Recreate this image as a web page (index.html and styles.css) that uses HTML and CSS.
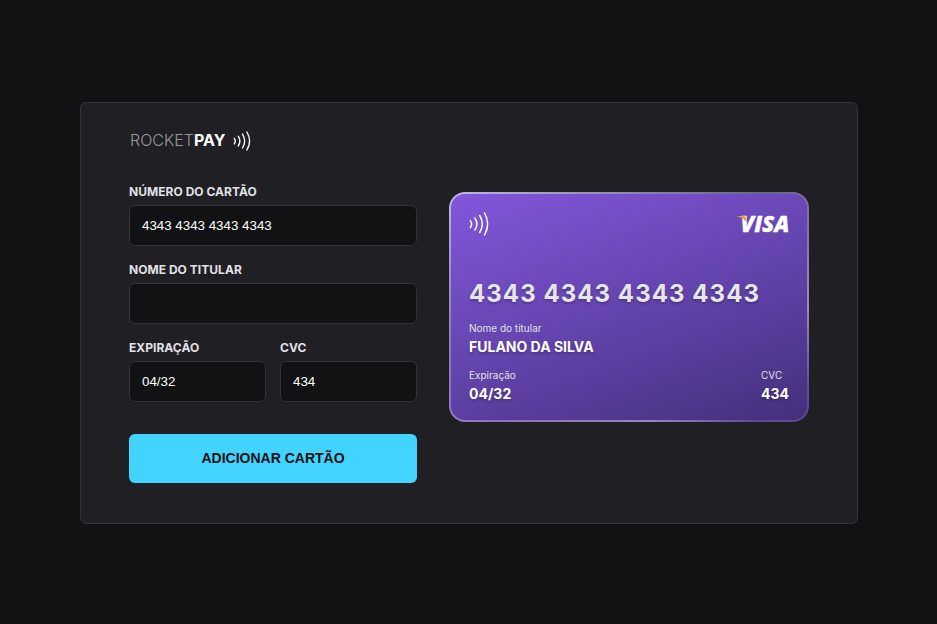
FILE: index.html
```html
<!DOCTYPE html>
<html lang="pt-BR">
<head>
<meta charset="UTF-8">
<title>Rocketpay</title>
<link rel="stylesheet" href="styles.css">
</head>
<body>
<main class="panel">
  <section class="left">
    <header class="logo">
      <span class="logo-name">ROCKET<b>PAY</b></span>
      <svg class="logo-waves" width="18" height="20" viewBox="0 0 18 20" fill="none" stroke="#fff" stroke-width="1.4" stroke-linecap="round"><path d="M1.3 7.4Q3.2 10 1.3 12.8M5.2 5.2Q8.6 10 5.2 15M9.5 3.1Q13.8 10 9.5 17M13.9 1Q19.3 10 13.9 19"/></svg>
    </header>
    <form class="form">
      <div class="field"><label for="number">NÚMERO DO CARTÃO</label><input id="number" value="4343 4343 4343 4343"></div>
      <div class="field"><label for="name">NOME DO TITULAR</label><input id="name"></div>
      <div class="pair">
        <div class="field"><label for="exp">EXPIRAÇÃO</label><input id="exp" value="04/32"></div>
        <div class="field"><label for="cvc">CVC</label><input id="cvc" value="434"></div>
      </div>
      <button type="button">ADICIONAR CARTÃO</button>
    </form>
  </section>
  <section class="card">
    <div class="card-top">
      <svg class="card-waves" width="20" height="24" viewBox="0 0 20 24" fill="none" stroke="#fff" stroke-width="1.5" stroke-linecap="round"><path d="M1.3 8.6Q3.9 12 1.3 15.7M5.8 6Q10 12 5.8 18M10.7 3.5Q16 12 10.7 20.5M15.5 1Q21.8 12 15.5 23"/></svg>
      <svg class="brand" width="52" height="26" viewBox="0 -4 52 26"><text class="brand-name" x="3.4" y="16.6" textLength="49" lengthAdjust="spacingAndGlyphs">VISA</text><path fill="#e79f3c" d="M0 1H6.5Q8.6 1 9 3L10 7.5Q6.5 3 0 1.3Z"/></svg>
    </div>
    <div class="card-number">4343 4343 4343 4343</div>
    <div class="info holder"><span>Nome do titular</span><strong>FULANO DA SILVA</strong></div>
    <div class="card-bottom">
      <div class="info"><span>Expiração</span><strong>04/32</strong></div>
      <div class="info"><span>CVC</span><strong>434</strong></div>
    </div>
  </section>
</main>
</body>
</html>
```
FILE: styles.css
```css
* { box-sizing: border-box; margin: 0; padding: 0; }
body {
  min-height: 100vh;
  padding-top: 102px;
  padding-left: 80px;
  background: #121214;
  font-family: Inter, sans-serif;
}
.panel {
  display: flex;
  gap: 32px;
  width: 778px;
  height: 422px;
  padding: 27px 48px 0;
  background: #202024;
  border: 1px solid #323238;
  border-radius: 6px;
}
.left { width: 288px; }
.logo {
  display: flex;
  align-items: center;
  height: 22px;
  padding-left: 1px;
  gap: 8px;
}
.logo-name {
  padding-bottom: 2px;
  font-size: 16px;
  font-weight: 300;
  line-height: 20px;
  color: #98989a;
}
.logo-name b { font-weight: 700; color: #fff; }
.form { margin-top: 31px; }
.field { margin-bottom: 15px; }
.field label {
  display: block;
  height: 22px;
  font-size: 12px;
  font-weight: 700;
  line-height: 17px;
  letter-spacing: .04px;
  color: #e1e1e6;
}
.field input {
  display: block;
  width: 100%;
  height: 41px;
  padding: 0 12px 1px;
  background: #121214;
  border: 1px solid #323238;
  border-radius: 6px;
  outline: none;
  color: #fff;
  font-family: "Liberation Sans", sans-serif;
  font-size: 13.333px;
}
.pair { display: grid; grid-template-columns: 1fr 1fr; gap: 14px; }
button {
  display: block;
  width: 100%;
  height: 49px;
  margin-top: 17px;
  padding-bottom: 2px;
  border: 0;
  border-radius: 6px;
  background: #42d3ff;
  color: #121214;
  font-family: "Liberation Sans", sans-serif;
  font-size: 14px;
  font-weight: 700;
}
.card {
  position: relative;
  width: 360px;
  height: 230px;
  margin-top: 62px;
  padding: 19px 20px 0;
  border-radius: 16px;
  background: linear-gradient(160deg, #8257dc 0%, #5f41a6 58%, #432f7b 100%);
}
.card::before {
  content: "";
  position: absolute;
  inset: 0;
  padding: 2px;
  border-radius: 16px;
  background: linear-gradient(145deg, rgba(225,222,232,.7) 0%, rgba(105,105,125,.8) 46%, rgba(190,180,220,.65) 76%, rgba(170,150,220,.25) 92%);
  mask: linear-gradient(#000 0 0) content-box exclude, linear-gradient(#000 0 0);
}
.card::after {
  content: "";
  position: absolute;
  inset: 0;
  padding: 2px;
  border-radius: 16px;
  background: radial-gradient(circle at 0 100%, rgba(155,125,220,.8) 0, rgba(155,125,220,0) 200px);
  mask: linear-gradient(#000 0 0) content-box exclude, linear-gradient(#000 0 0);
}
.card-top { display: flex; justify-content: space-between; align-items: center; height: 26px; }
.card-waves, .brand { display: block; overflow: visible; }
.brand-name {
  font-family: "Open Sans", sans-serif;
  font-size: 22px;
  font-weight: 800;
  font-style: italic;
  fill: #fff;
  stroke: #fff;
  stroke-width: .3px;
}
.card-number {
  margin-top: 42px;
  font-size: 24px;
  font-weight: 700;
  line-height: 30px;
  letter-spacing: 1.06px;
  color: #e6e6e6;
  text-shadow: 0 2px 3px rgba(0,0,0,.25);
  white-space: nowrap;
}
.info { display: flex; flex-direction: column; }
.info span { font-size: 10px; line-height: 14px; color: #e1e1e6; }
.info strong {
  margin-top: 2px;
  font-size: 14px;
  font-weight: 700;
  line-height: 20px;
  color: #fff;
  text-shadow: 0 2px 3px rgba(0,0,0,.25);
}
.holder { margin-top: 12px; }
.card-bottom { display: flex; justify-content: space-between; margin-top: 11px; }
```
